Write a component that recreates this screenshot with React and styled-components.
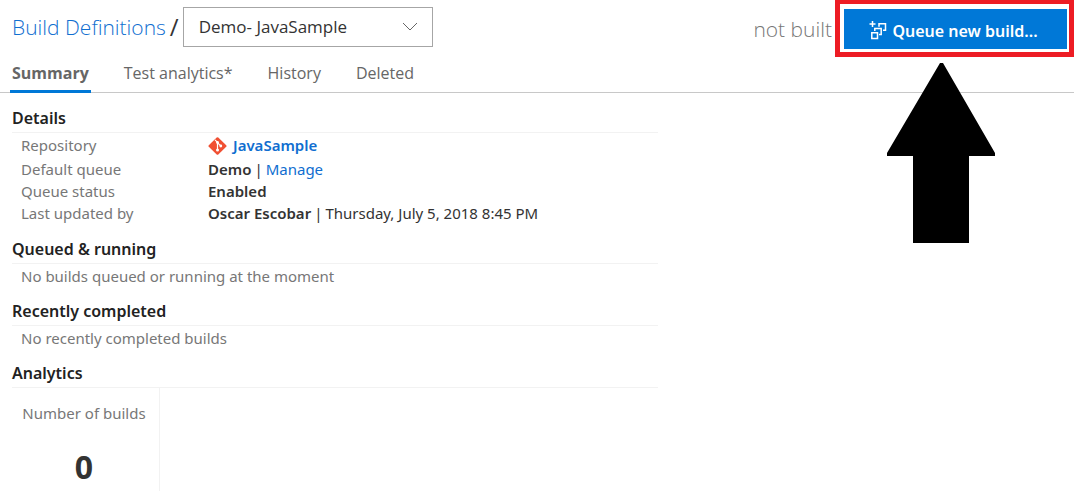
import React from "react";
import styled, { createGlobalStyle } from "styled-components";

const GlobalStyle = createGlobalStyle`
  *, *::before, *::after { box-sizing: border-box; }
  body {
    margin: 0;
    background: #fff;
    color: #333;
    font: 15px/22px "Noto Sans", "Open Sans", sans-serif;
  }
  h1, h2, p, dl, dd { margin: 0; }
`;

const Page = styled.div`
  position: relative;
`;

const Header = styled.header`
  display: flex;
  align-items: flex-start;
  justify-content: space-between;
  padding: 7px 7px 0 12px;
`;

const Crumbs = styled.div`
  display: flex;
  align-items: center;
  gap: 4px;
  height: 40px;
  font: 21px/36px "Open Sans", "Noto Sans", sans-serif;
`;

const Slash = styled.span`
  font-size: 24px;
`;

const Link = styled.a`
  color: #106ed0;
  text-decoration: none;
  font-weight: ${(p) => p.$weight || 400};
`;

const Picker = styled.div`
  position: relative;
  width: 250px;
`;

const Select = styled.select`
  display: block;
  appearance: none;
  width: 100%;
  height: 40px;
  padding: 0 40px 0 15px;
  border: 1px solid #a6a6a6;
  border-radius: 0;
  background: #fff;
  color: #333;
  font: 17px/24px "Open Sans", "Noto Sans", sans-serif;
`;

const Chevron = styled.svg`
  position: absolute;
  top: 15px;
  right: 15px;
  pointer-events: none;
`;

const Actions = styled.div`
  display: flex;
  align-items: flex-start;
  gap: 12px;
`;

const Status = styled.span`
  color: #777;
  font: 300 21px/44px "Open Sans", "Noto Sans", sans-serif;
`;

const Callout = styled.div`
  position: relative;
  padding-top: 2px;
  &::after {
    content: "";
    position: absolute;
    inset: -7px -7px -8px -9px;
    border: 5px solid #ed1c24;
    border-top-width: 4px;
    pointer-events: none;
  }
`;

const Arrow = styled.svg`
  position: absolute;
  top: 56px;
  left: 43px;
  z-index: 1;
`;

const PrimaryButton = styled.button`
  display: flex;
  align-items: center;
  justify-content: center;
  gap: 5px;
  width: 223px;
  height: 40px;
  padding: 4px 4px 0 0;
  border: 0;
  background: #0078d7;
  color: #fff;
  font: 600 16px/24px "Noto Sans", "Open Sans", sans-serif;
  white-space: nowrap;
`;

const Tabs = styled.nav`
  display: flex;
  gap: 31px;
  padding: 3px 10px 0;
  border-bottom: 1px solid #c8c8c8;
`;

const Tab = styled.a`
  height: 39px;
  margin-bottom: -1px;
  padding: 0 2px;
  border-bottom: 3px solid ${(p) => (p.$active ? "#0078d7" : "transparent")};
  color: #666;
  font: ${(p) => (p.$active ? 700 : 400)} 16px/38px "Open Sans", "Noto Sans", sans-serif;
  text-decoration: none;
`;

const Main = styled.main`
  display: flex;
  flex-direction: column;
  gap: 7px;
  max-width: 658px;
  padding: 10px 0 0 12px;
`;

const Heading = styled.h2`
  padding-top: 2px;
  border-bottom: 1px solid #f2f2f2;
  color: #222;
  font-size: 16px;
  font-weight: 600;
  line-height: 27px;
`;

const Details = styled.dl`
  padding: 0 0 3px 9px;
`;

const Row = styled.div`
  display: grid;
  grid-template-columns: 187px 1fr;
  line-height: ${(p) => (p.$tall ? 25 : 22)}px;
`;

const Term = styled.dt`
  color: #777;
`;

const Value = styled.dd`
  display: flex;
  align-items: center;
  gap: ${(p) => (p.$icon ? 6 : 3)}px;
  b { font-weight: 600; }
`;

const Note = styled.p`
  padding-left: 9px;
  color: #777;
  line-height: 25px;
`;

const Stat = styled.div`
  width: 148px;
  padding: 14px 12px 3px 9px;
  border-right: 1px solid #f2f2f2;
  text-align: center;
  white-space: nowrap;
`;

const StatLabel = styled.div`
  color: #777;
`;

const StatValue = styled.div`
  padding-top: 22px;
  font-size: 32px;
  font-weight: 700;
  line-height: 42px;
`;

function QueueIcon() {
  return (
    <svg width="18" height="20" viewBox="0 0 18 20" fill="none" stroke="#fff" strokeWidth="1.5" aria-hidden="true">
      <path d="M3.5 0v6M0.5 3h6" />
      <path d="M2.8 11.8h5.7v5.7H2.8z" />
      <path d="M5.8 10V7.6h6.4v6H10" />
      <path d="M10 5.8V2.8h6.5v6.4H14" />
    </svg>
  );
}

function GitIcon() {
  return (
    <svg width="19" height="18" viewBox="0 0 19 18" aria-hidden="true">
      <path d="M8.7 0.6 0.8 8.2q-.8.8 0 1.6l7.9 7.6q.8.7 1.6 0l7.9-7.6q.8-.8 0-1.6L10.3.6q-.8-.7-1.6 0z" fill="#f05033" />
      <path d="M7 2.8 9.5 5.4V13M9.5 5.6l3.2 3.3" fill="none" stroke="#fff" strokeWidth="1.2" />
      <circle cx="9.5" cy="5.5" r="1.4" fill="#fff" />
      <circle cx="9.5" cy="13" r="1.5" fill="#fff" />
      <circle cx="12.8" cy="9" r="1.4" fill="#fff" />
    </svg>
  );
}

const tabs = ["Summary", "Test analytics*", "History", "Deleted"];

export default function App() {
  return (
    <Page>
      <GlobalStyle />
      <Header>
        <Crumbs>
          <Link href="#definitions" $weight={300}>Build Definitions</Link>
          <Slash>/</Slash>
          <Picker>
            <Select aria-label="Build definition" defaultValue="demo">
              <option value="demo">Demo- JavaSample</option>
            </Select>
            <Chevron width="16" height="10" viewBox="0 0 16 10" fill="none" stroke="#666" aria-hidden="true">
              <path d="M1 1l7 7 7-7" />
            </Chevron>
          </Picker>
        </Crumbs>
        <Actions>
          <Status>not built</Status>
          <Callout>
            <PrimaryButton type="button">
              <QueueIcon />
              Queue new build...
            </PrimaryButton>
            <Arrow width="108" height="180" viewBox="0 0 108 180" aria-hidden="true">
              <path d="M53 0h3l52 90v3H82v87H26V93H0v-3z" fill="#000" />
            </Arrow>
          </Callout>
        </Actions>
      </Header>
      <Tabs aria-label="Build definition views">
        {tabs.map((tab, i) => (
          <Tab key={tab} href="#view" $active={i === 0} aria-current={i === 0 ? "page" : undefined}>
            {tab}
          </Tab>
        ))}
      </Tabs>
      <Main>
        <section>
          <Heading>Details</Heading>
          <Details>
            <Row $tall>
              <Term>Repository</Term>
              <Value $icon>
                <GitIcon />
                <Link href="#repository" $weight={600}>JavaSample</Link>
              </Value>
            </Row>
            <Row>
              <Term>Default queue</Term>
              <Value><b>Demo</b><span>|</span><Link href="#manage">Manage</Link></Value>
            </Row>
            <Row>
              <Term>Queue status</Term>
              <Value><b>Enabled</b></Value>
            </Row>
            <Row>
              <Term>Last updated by</Term>
              <Value><b>Oscar Escobar</b><span>|</span><span>Thursday, July 5, 2018 8:45 PM</span></Value>
            </Row>
          </Details>
        </section>
        <section>
          <Heading>Queued &amp; running</Heading>
          <Note>No builds queued or running at the moment</Note>
        </section>
        <section>
          <Heading>Recently completed</Heading>
          <Note>No recently completed builds</Note>
        </section>
        <section>
          <Heading>Analytics</Heading>
          <Stat>
            <StatLabel>Number of builds</StatLabel>
            <StatValue>0</StatValue>
          </Stat>
        </section>
      </Main>
    </Page>
  );
}
